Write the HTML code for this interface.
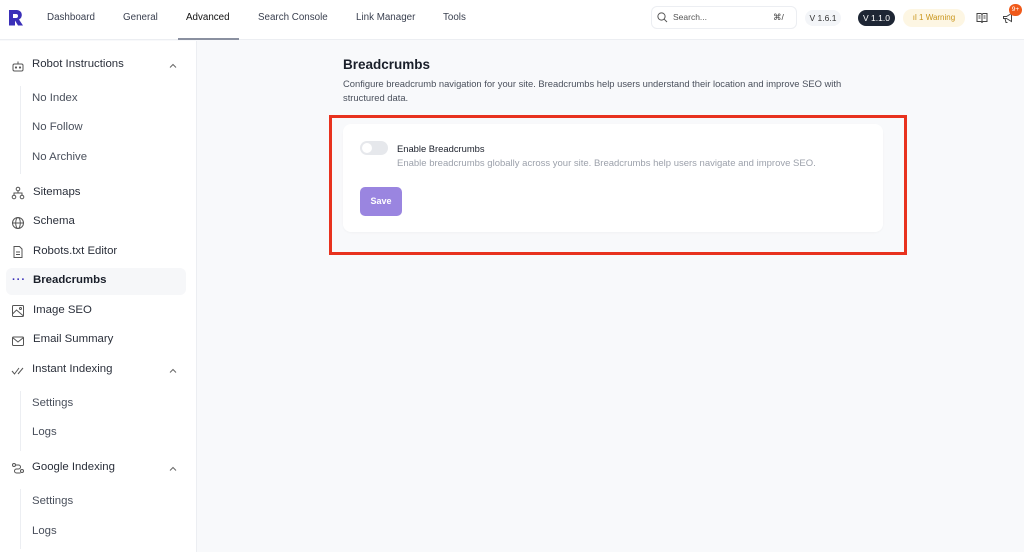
<!DOCTYPE html><html><head><style>
*{margin:0;padding:0;box-sizing:border-box}
body{width:1024px;height:552px;overflow:hidden;font-family:"Liberation Sans",sans-serif;background:#f8f9fb;position:relative;color:#1f2430}
.a{position:absolute;white-space:nowrap}
.hdr{position:absolute;left:0;top:0;width:1024px;height:40px;background:#fff;border-bottom:1px solid #eceef2}
.nav{font-size:9.8px;color:#3b4150;top:12px}
.side{position:absolute;left:0;top:41px;width:197px;height:511px;background:#fff;border-right:1px solid #eceef2}
.si{font-size:11.4px;color:#2a2f3a}
.sub{font-size:11.4px;color:#4a505c}
.ic{position:absolute;left:11px;width:14px;height:14px}
.chev{position:absolute;left:168px;width:10px;height:10px}
</style></head><body>
<div class="hdr">
<svg class="a" style="left:8px;top:9px" width="16" height="17" viewBox="0 0 16 17"><path d="M1 1h8a5 5 0 0 1 2 9.5l4 6h-5l-3-5v5H1z" fill="#3a2fb8"/><path d="M5 5h3a2 2 0 0 1 0 4H5z" fill="#fff"/></svg>
<div class="a nav" style="left:47px">Dashboard</div>
<div class="a nav" style="left:123px">General</div>
<div class="a nav" style="left:186px;color:#111">Advanced</div>
<div class="a" style="left:178px;top:38px;width:61px;height:2px;background:#8a90a0"></div>
<div class="a nav" style="left:258px">Search Console</div>
<div class="a nav" style="left:356px">Link Manager</div>
<div class="a nav" style="left:443px">Tools</div>
<div class="a" style="left:651px;top:6px;width:146px;height:23px;border:1px solid #eceef2;border-radius:6px;background:#fff"></div>
<svg class="a" style="left:657px;top:12px" width="11" height="11" viewBox="0 0 11 11"><circle cx="4.5" cy="4.5" r="3.6" fill="none" stroke="#555" stroke-width="1"/><path d="M7.2 7.2L10 10" stroke="#555"/></svg>
<div class="a" style="left:673px;top:12px;font-size:8.5px;color:#555">Search...</div>
<div class="a" style="left:773px;top:12px;font-size:8.5px;color:#444">⌘/</div>
<div class="a" style="left:805px;top:10px;width:36px;height:16px;border-radius:8px;background:#f3f5f8;font-size:8.5px;color:#333;text-align:center;line-height:16px">V 1.6.1</div>
<div class="a" style="left:858px;top:10px;width:37px;height:16px;border-radius:8px;background:#1e2634;font-size:8.5px;color:#fff;text-align:center;line-height:16px">V 1.1.0</div>
<div class="a" style="left:903px;top:9px;width:62px;height:18px;border-radius:9px;background:#fdf6e3;font-size:8px;color:#c9951a;text-align:center;line-height:18px">ıl 1 Warning</div>
<svg class="a" style="left:976px;top:12px" width="12" height="11" viewBox="0 0 12 11" fill="none" stroke="#444" stroke-width="1"><path d="M1 1.5h4l1 1 1-1h4v8H7l-1 1-1-1H1z M6 2.5v7.5M2.5 4h2M2.5 6h2M7.5 4h2M7.5 6h2"/></svg>
<svg class="a" style="left:1002px;top:12px" width="12" height="12" viewBox="0 0 12 12" fill="none" stroke="#444" stroke-width="1"><path d="M1.5 4.5h3l5-3v8l-5-3h-3z M3 6.5l1 4h1.5"/></svg>
<div class="a" style="left:1009px;top:4px;width:13px;height:12px;border-radius:6px;background:#f05a1a;color:#fff;font-size:6.5px;text-align:center;line-height:12px">9+</div>
</div>
<div class="side">
<div class="a" style="left:20px;top:45px;width:1px;height:88px;background:#eceef2"></div>
<div class="a" style="left:20px;top:350px;width:1px;height:60px;background:#eceef2"></div>
<div class="a" style="left:20px;top:448px;width:1px;height:60px;background:#eceef2"></div>
<div class="a" style="left:6px;top:227px;width:180px;height:27px;background:#f6f7f9;border-radius:6px"></div>
</div>
<svg class="ic" style="top:59px" viewBox="0 0 14 14" fill="none" stroke="#555" stroke-width="1"><rect x="2" y="5" width="10" height="7" rx="1.5"/><path d="M7 5V2.5"/><circle cx="5" cy="8.5" r=".6" fill="#555"/><circle cx="9" cy="8.5" r=".6" fill="#555"/></svg>
<div class="a si" style="left:32px;top:58px">Robot Instructions</div>
<svg class="chev" style="top:61px" viewBox="0 0 10 10"><path d="M2 6.5L5 3.5 8 6.5" fill="none" stroke="#666"/></svg>
<div class="a sub" style="left:32px;top:92px">No Index</div>
<div class="a sub" style="left:32px;top:121px">No Follow</div>
<div class="a sub" style="left:32px;top:151px">No Archive</div>
<svg class="ic" style="top:186px" viewBox="0 0 14 14" fill="none" stroke="#555" stroke-width="1"><circle cx="7" cy="3" r="1.8"/><circle cx="3" cy="11" r="1.8"/><circle cx="11" cy="11" r="1.8"/><path d="M7 5v2M3 9V7h8v2"/></svg>
<div class="a si" style="left:33px;top:186px">Sitemaps</div>
<svg class="ic" style="top:216px" viewBox="0 0 14 14" fill="none" stroke="#555" stroke-width="1"><circle cx="7" cy="7" r="5.5"/><ellipse cx="7" cy="7" rx="2.3" ry="5.5"/><path d="M1.5 7h11"/></svg>
<div class="a si" style="left:33px;top:215px">Schema</div>
<svg class="ic" style="top:245px" viewBox="0 0 14 14" fill="none" stroke="#555" stroke-width="1"><path d="M3 1.5h5.5L11 4v8.5H3z"/><path d="M5 7h4M5 9.5h4"/></svg>
<div class="a si" style="left:33px;top:245px">Robots.txt Editor</div>
<div class="a" style="left:12px;top:274px;font-size:11px;color:#3a2fb8;letter-spacing:1px;font-weight:bold">···</div>
<div class="a si" style="left:33px;top:274px;font-weight:bold;color:#1a1f2a">Breadcrumbs</div>
<svg class="ic" style="top:304px" viewBox="0 0 14 14" fill="none" stroke="#555" stroke-width="1"><rect x="1.5" y="1.5" width="11" height="11" rx="1"/><path d="M1.5 10l4-4 7 6"/><circle cx="9.5" cy="4.5" r="1"/></svg>
<div class="a si" style="left:33px;top:304px">Image SEO</div>
<svg class="ic" style="top:334px" viewBox="0 0 14 14" fill="none" stroke="#555" stroke-width="1"><rect x="1.5" y="3" width="11" height="8.5" rx="1"/><path d="M1.5 3.5L7 8l5.5-4.5"/></svg>
<div class="a si" style="left:33px;top:333px">Email Summary</div>
<svg class="ic" style="top:364px" viewBox="0 0 14 14" fill="none" stroke="#555" stroke-width="1"><path d="M1 7l2.5 3L8 4M7 10l5-6"/></svg>
<div class="a si" style="left:32px;top:363px">Instant Indexing</div>
<svg class="chev" style="top:366px" viewBox="0 0 10 10"><path d="M2 6.5L5 3.5 8 6.5" fill="none" stroke="#666"/></svg>
<div class="a sub" style="left:32px;top:397px">Settings</div>
<div class="a sub" style="left:32px;top:426px">Logs</div>
<svg class="ic" style="top:461px" viewBox="0 0 14 14" fill="none" stroke="#555" stroke-width="1"><circle cx="3" cy="4" r="1.5"/><circle cx="11" cy="10" r="1.5"/><path d="M4.5 4h3a2 2 0 0 1 0 4h-2a2 2 0 0 0 0 4h4"/></svg>
<div class="a si" style="left:32px;top:461px">Google Indexing</div>
<svg class="chev" style="top:464px" viewBox="0 0 10 10"><path d="M2 6.5L5 3.5 8 6.5" fill="none" stroke="#666"/></svg>
<div class="a sub" style="left:32px;top:495px">Settings</div>
<div class="a sub" style="left:32px;top:525px">Logs</div>

<div class="a" style="left:343px;top:57px;font-size:13.5px;font-weight:bold;color:#1a1f2a">Breadcrumbs</div>
<div class="a" style="left:343px;top:77px;font-size:9.4px;color:#4a505c;line-height:14px;white-space:normal;width:532px">Configure breadcrumb navigation for your site. Breadcrumbs help users understand their location and improve SEO with structured data.</div>
<div class="a" style="left:343px;top:124px;width:540px;height:108px;background:#fff;border-radius:8px;box-shadow:0 1px 2px rgba(0,0,0,.03)"></div>
<div class="a" style="left:360px;top:141px;width:28px;height:14px;border-radius:7px;background:#e6e8ec"></div>
<div class="a" style="left:362px;top:143px;width:10px;height:10px;border-radius:5px;background:#fff"></div>
<div class="a" style="left:397px;top:143px;font-size:9.4px;color:#1a1f2a">Enable Breadcrumbs</div>
<div class="a" style="left:397px;top:158px;font-size:9.5px;color:#9ca1ab">Enable breadcrumbs globally across your site. Breadcrumbs help users navigate and improve SEO.</div>
<div class="a" style="left:360px;top:187px;width:42px;height:29px;border-radius:5px;background:#9a85e0;color:#fff;font-size:9px;font-weight:bold;text-align:center;line-height:29px">Save</div>
<div class="a" style="left:329px;top:115px;width:578px;height:140px;border:3px solid #e8321e"></div>
</body></html>
